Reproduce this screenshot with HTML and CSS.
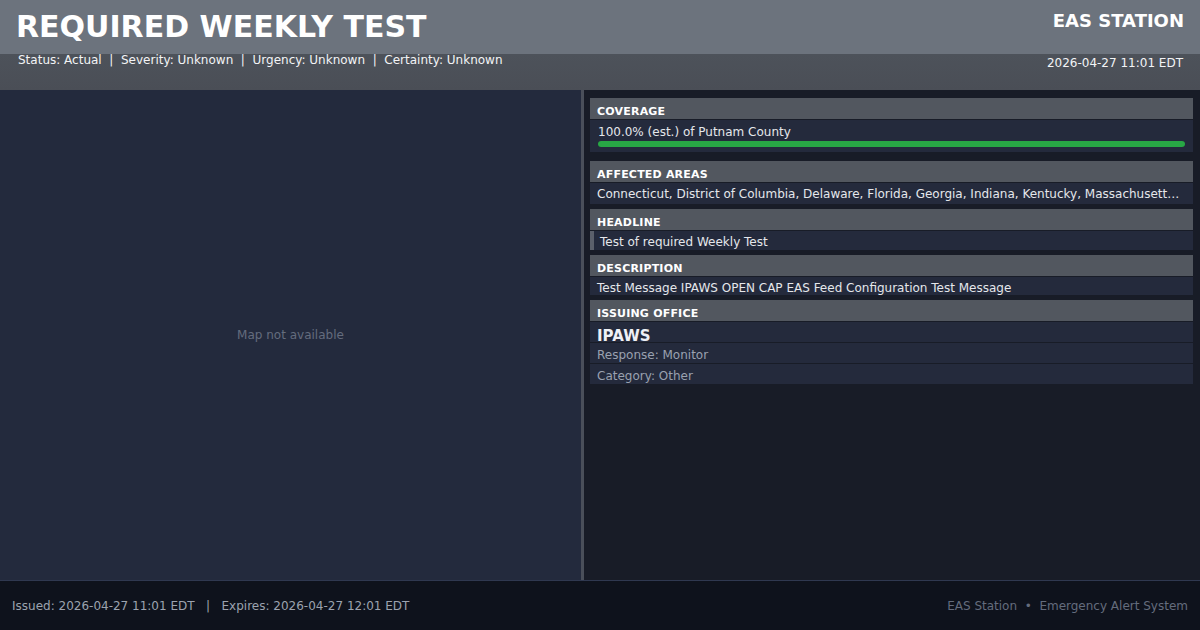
FILE: index.html
```html
<!DOCTYPE html>
<html>
<head>
<meta charset="utf-8">
<link rel="stylesheet" href="styles.css">
</head>
<body>
<div class="page">
  <header class="hdr">
    <div class="hdr-top">
      <div class="title">REQUIRED WEEKLY TEST</div>
      <div class="station">EAS STATION</div>
    </div>
    <div class="hdr-sub">
      <div class="meta">Status: Actual &nbsp;|&nbsp; Severity: Unknown &nbsp;|&nbsp; Urgency: Unknown &nbsp;|&nbsp; Certainty: Unknown</div>
      <div class="clock">2026-04-27 11:01 EDT</div>
    </div>
  </header>
  <main class="main">
    <div class="map"><span class="map-msg">Map not available</span></div>
    <div class="divider"></div>
    <div class="panel">
      <section class="sec sec-coverage">
        <div class="sec-label">COVERAGE</div>
        <div class="sec-body cov-body">
          <div class="cov-text">100.0% (est.) of Putnam County</div>
          <div class="bar"><div class="bar-fill" style="width:100%"></div></div>
        </div>
      </section>
      <section class="sec">
        <div class="sec-label">AFFECTED AREAS</div>
        <div class="sec-body row-21 ellip">Connecticut, District of Columbia, Delaware, Florida, Georgia, Indiana, Kentucky, Massachusetts, Maryland, Maine</div>
      </section>
      <section class="sec">
        <div class="sec-label">HEADLINE</div>
        <div class="sec-body headline">Test of required Weekly Test</div>
      </section>
      <section class="sec">
        <div class="sec-label">DESCRIPTION</div>
        <div class="sec-body row-19">Test Message IPAWS OPEN CAP EAS Feed Configuration Test Message</div>
      </section>
      <section class="sec">
        <div class="sec-label">ISSUING OFFICE</div>
        <div class="sec-body office">IPAWS</div>
        <div class="sec-body row-20 muted">Response: Monitor</div>
        <div class="sec-body row-20 muted">Category: Other</div>
      </section>
    </div>
  </main>
  <footer class="ftr">
    <div class="ftr-left">Issued: 2026-04-27 11:01 EDT &nbsp;&nbsp;|&nbsp;&nbsp; Expires: 2026-04-27 12:01 EDT</div>
    <div class="ftr-right">EAS Station &nbsp;•&nbsp; Emergency Alert System</div>
  </footer>
</div>
</body>
</html>
```

FILE: styles.css
```css
* { box-sizing: border-box; }
html, body { margin: 0; padding: 0; }
body {
  width: 1200px;
  height: 630px;
  overflow: hidden;
  background: #181c27;
  font-family: "DejaVu Sans", Verdana, sans-serif;
  color: #e5e7eb;
}
.page { display: flex; flex-direction: column; height: 630px; }

.hdr { height: 90px; display: flex; flex-direction: column; }
.hdr-top {
  height: 54px;
  background: #6c737d;
  display: flex;
  justify-content: space-between;
  align-items: flex-start;
  padding: 0 16px 0 16px;
}
.title {
  font-size: 30px;
  font-weight: bold;
  color: #ffffff;
  line-height: 54px;
}
.station {
  font-size: 18px;
  font-weight: bold;
  color: #ffffff;
  margin-top: 10px;
  line-height: 21px;
}
.hdr-sub {
  height: 36px;
  background: linear-gradient(#4d525a, #4a4e56);
  display: flex;
  justify-content: space-between;
  padding: 0 17px 0 18px;
  font-size: 12px;
  line-height: 12px;
  color: #f3f4f6;
}
.clock { margin-top: 3px; }

.main { height: 490px; display: flex; }
.map {
  width: 581px;
  flex-shrink: 0;
  background: #232a3d;
  display: flex;
  align-items: center;
  justify-content: center;
}
.map-msg { font-size: 12px; color: #646c7d; }
.divider { width: 3px; flex-shrink: 0; background: #4a4f5a; }
.panel {
  flex: 1;
  min-width: 0;
  background: #181c27;
  padding: 8px 7px 0 6px;
  display: flex;
  flex-direction: column;
}
.sec { display: flex; flex-direction: column; gap: 1px; margin-bottom: 5px; }
.sec-coverage { margin-bottom: 9px; }
.sec-label {
  height: 21px;
  background: #52575f;
  font-size: 11px;
  font-weight: bold;
  color: #ffffff;
  padding: 7px 7px 0 7px;
  line-height: 13px;
  letter-spacing: 0.2px;
}
.sec-body {
  background: #242a3c;
  font-size: 12px;
  color: #e5e7eb;
  padding: 0 7px;
}
.cov-body { height: 32px; padding: 5px 8px 0 8px; }
.cov-text { line-height: 14px; }
.bar { margin-top: 2px; height: 6px; border-radius: 3px; background: #1d2231; }
.bar-fill { height: 6px; border-radius: 3px; background: #28a745; }
.row-21 { height: 21px; line-height: 19px; padding-top: 2px; }
.row-19 { height: 18px; line-height: 18px; padding-top: 2px; }
.row-20 { height: 20px; line-height: 20px; padding-top: 2px; }
.ellip { white-space: nowrap; overflow: hidden; text-overflow: ellipsis; padding-right: 9px; }
.headline {
  height: 19px;
  line-height: 20px;
  border-left: 4px solid #5b606b;
  padding-left: 6px;
  padding-top: 1px;
}
.office { height: 20px; line-height: 22px; font-size: 15px; font-weight: bold; color: #eef0f5; padding-top: 3px; }
.muted { color: #9aa1b0; }

.ftr {
  height: 50px;
  background: #0e121c;
  border-top: 1px solid #2f3850;
  display: flex;
  justify-content: space-between;
  align-items: center;
  padding: 0 12px 0 12px;
  font-size: 12px;
}
.ftr-left { color: #9ca3af; }
.ftr-right { color: #646c7d; }
```
